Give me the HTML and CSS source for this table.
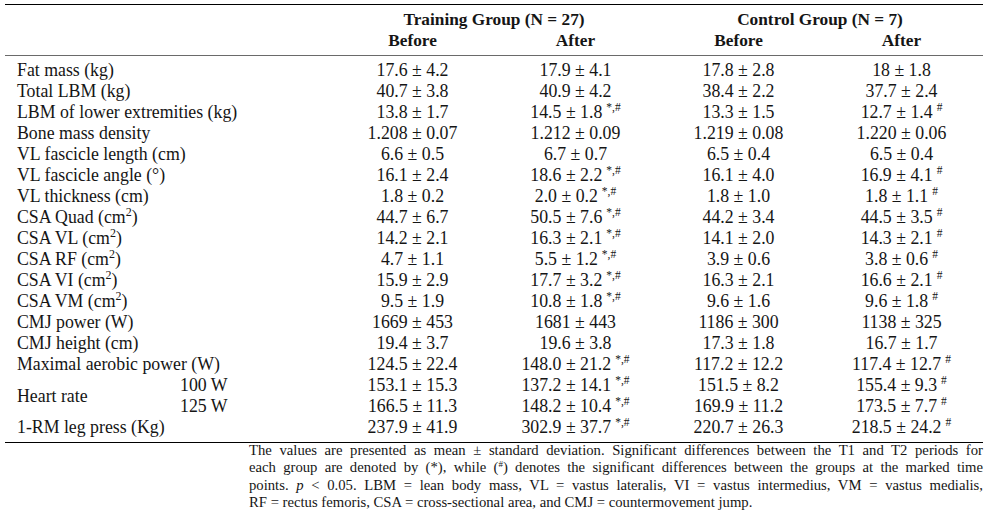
FILE: index.html
```html
<!DOCTYPE html>
<html lang="en">
<head>
<meta charset="utf-8">
<title>Table</title>
<link rel="stylesheet" href="styles.css">
</head>
<body>
<div class="page">
  <table class="data">
    <colgroup>
      <col class="c-lab"><col class="c-sub"><col class="c-val"><col class="c-val"><col class="c-val"><col class="c-val">
    </colgroup>
    <thead>
      <tr class="h1">
        <th colspan="2"></th>
        <th colspan="2">Training Group (N = 27)</th>
        <th colspan="2">Control Group (N = 7)</th>
      </tr>
      <tr class="h2">
        <th colspan="2"></th>
        <th>Before</th><th>After</th><th>Before</th><th>After</th>
      </tr>
    </thead>
    <tbody>
      <tr class="first"><td class="lab" colspan="2">Fat mass (kg)</td><td>17.6 ± 4.2</td><td>17.9 ± 4.1</td><td>17.8 ± 2.8</td><td>18 ± 1.8</td></tr>
      <tr><td class="lab" colspan="2">Total LBM (kg)</td><td>40.7 ± 3.8</td><td>40.9 ± 4.2</td><td>38.4 ± 2.2</td><td>37.7 ± 2.4</td></tr>
      <tr><td class="lab" colspan="2">LBM of lower extremities (kg)</td><td>13.8 ± 1.7</td><td>14.5 ± 1.8<sup>*,#</sup></td><td>13.3 ± 1.5</td><td>12.7 ± 1.4<sup>#</sup></td></tr>
      <tr><td class="lab" colspan="2">Bone mass density</td><td>1.208 ± 0.07</td><td>1.212 ± 0.09</td><td>1.219 ± 0.08</td><td>1.220 ± 0.06</td></tr>
      <tr><td class="lab" colspan="2">VL fascicle length (cm)</td><td>6.6 ± 0.5</td><td>6.7 ± 0.7</td><td>6.5 ± 0.4</td><td>6.5 ± 0.4</td></tr>
      <tr><td class="lab" colspan="2">VL fascicle angle (°)</td><td>16.1 ± 2.4</td><td>18.6 ± 2.2<sup>*,#</sup></td><td>16.1 ± 4.0</td><td>16.9 ± 4.1<sup>#</sup></td></tr>
      <tr><td class="lab" colspan="2">VL thickness (cm)</td><td>1.8 ± 0.2</td><td>2.0 ± 0.2<sup>*,#</sup></td><td>1.8 ± 1.0</td><td>1.8 ± 1.1<sup>#</sup></td></tr>
      <tr><td class="lab" colspan="2">CSA Quad (cm<sup class="u">2</sup>)</td><td>44.7 ± 6.7</td><td>50.5 ± 7.6<sup>*,#</sup></td><td>44.2 ± 3.4</td><td>44.5 ± 3.5<sup>#</sup></td></tr>
      <tr><td class="lab" colspan="2">CSA VL (cm<sup class="u">2</sup>)</td><td>14.2 ± 2.1</td><td>16.3 ± 2.1<sup>*,#</sup></td><td>14.1 ± 2.0</td><td>14.3 ± 2.1<sup>#</sup></td></tr>
      <tr><td class="lab" colspan="2">CSA RF (cm<sup class="u">2</sup>)</td><td>4.7 ± 1.1</td><td>5.5 ± 1.2<sup>*,#</sup></td><td>3.9 ± 0.6</td><td>3.8 ± 0.6<sup>#</sup></td></tr>
      <tr><td class="lab" colspan="2">CSA VI (cm<sup class="u">2</sup>)</td><td>15.9 ± 2.9</td><td>17.7 ± 3.2<sup>*,#</sup></td><td>16.3 ± 2.1</td><td>16.6 ± 2.1<sup>#</sup></td></tr>
      <tr><td class="lab" colspan="2">CSA VM (cm<sup class="u">2</sup>)</td><td>9.5 ± 1.9</td><td>10.8 ± 1.8<sup>*,#</sup></td><td>9.6 ± 1.6</td><td>9.6 ± 1.8<sup>#</sup></td></tr>
      <tr><td class="lab" colspan="2">CMJ power (W)</td><td>1669 ± 453</td><td>1681 ± 443</td><td>1186 ± 300</td><td>1138 ± 325</td></tr>
      <tr><td class="lab" colspan="2">CMJ height (cm)</td><td>19.4 ± 3.7</td><td>19.6 ± 3.8</td><td>17.3 ± 1.8</td><td>16.7 ± 1.7</td></tr>
      <tr><td class="lab" colspan="2">Maximal aerobic power (W)</td><td>124.5 ± 22.4</td><td>148.0 ± 21.2<sup>*,#</sup></td><td>117.2 ± 12.2</td><td>117.4 ± 12.7<sup>#</sup></td></tr>
      <tr><td class="lab" rowspan="2">Heart rate</td><td class="sub">100 W</td><td>153.1 ± 15.3</td><td>137.2 ± 14.1<sup>*,#</sup></td><td>151.5 ± 8.2</td><td>155.4 ± 9.3<sup>#</sup></td></tr>
      <tr><td class="sub">125 W</td><td>166.5 ± 11.3</td><td>148.2 ± 10.4<sup>*,#</sup></td><td>169.9 ± 11.2</td><td>173.5 ± 7.7<sup>#</sup></td></tr>
      <tr class="last"><td class="lab" colspan="2">1-RM leg press (Kg)</td><td>237.9 ± 41.9</td><td>302.9 ± 37.7<sup>*,#</sup></td><td>220.7 ± 26.3</td><td>218.5 ± 24.2<sup>#</sup></td></tr>
    </tbody>
  </table>
  <div class="note">
    <div class="ln">The values are presented as mean ± standard deviation. Significant differences between the T1 and T2 periods for</div>
    <div class="ln">each group are denoted by (*), while (<sup class="n">#</sup>) denotes the significant differences between the groups at the marked time</div>
    <div class="ln">points. <i>p</i> &lt; 0.05. LBM = lean body mass, VL = vastus lateralis, VI = vastus intermedius, VM = vastus medialis,</div>
    <div class="ln end">RF = rectus femoris, CSA = cross-sectional area, and CMJ = countermovement jump.</div>
  </div>
</div>
</body>
</html>
```
FILE: styles.css
```css
* { box-sizing: border-box; }
body {
  margin: 0;
  background: #fff;
  color: #151515;
  font-family: "Liberation Serif", "Times New Roman", serif;
}
.page {
  padding: 4px 0 0 5px;
}
.data {
  width: 978px;
  border-collapse: collapse;
  table-layout: fixed;
  font-size: 17.8px;
  line-height: 21px;
}
.c-lab, .c-sub, .c-val { width: 163px; }
.data th, .data td {
  padding: 0;
  text-align: center;
  white-space: nowrap;
  vertical-align: middle;
}
.data thead th {
  font-weight: bold;
  font-size: 17.3px;
}
.h1 th {
  border-top: 1px solid #000;
  padding-top: 4px;
  height: 25px;
}
.h2 th {
  border-bottom: 1px solid #6a6a6a;
  height: 25px;
  padding-bottom: 4px;
}
.data td.lab {
  text-align: left;
  padding-left: 12px;
}
.data td.sub {
  text-align: left;
  padding-left: 12px;
}
.first td { padding-top: 4px; }
.last td {
  padding-bottom: 4px;
  border-bottom: 1px solid #000;
}
.data sup {
  font-size: 11.5px;
  line-height: 0;
  vertical-align: 7px;
  padding-left: 4px;
}
.data sup.u {
  padding-left: 0;
  font-size: 12px;
}
.note {
  margin-left: 244px;
  margin-top: -1px;
  width: 734px;
  font-size: 14.7px;
  line-height: 17.3px;
}
.note .ln {
  text-align: justify;
  text-align-last: justify;
  white-space: nowrap;
}
.note .ln.end { text-align-last: left; }
.note sup.n {
  font-size: 9px;
  line-height: 0;
  vertical-align: 5px;
}
```
